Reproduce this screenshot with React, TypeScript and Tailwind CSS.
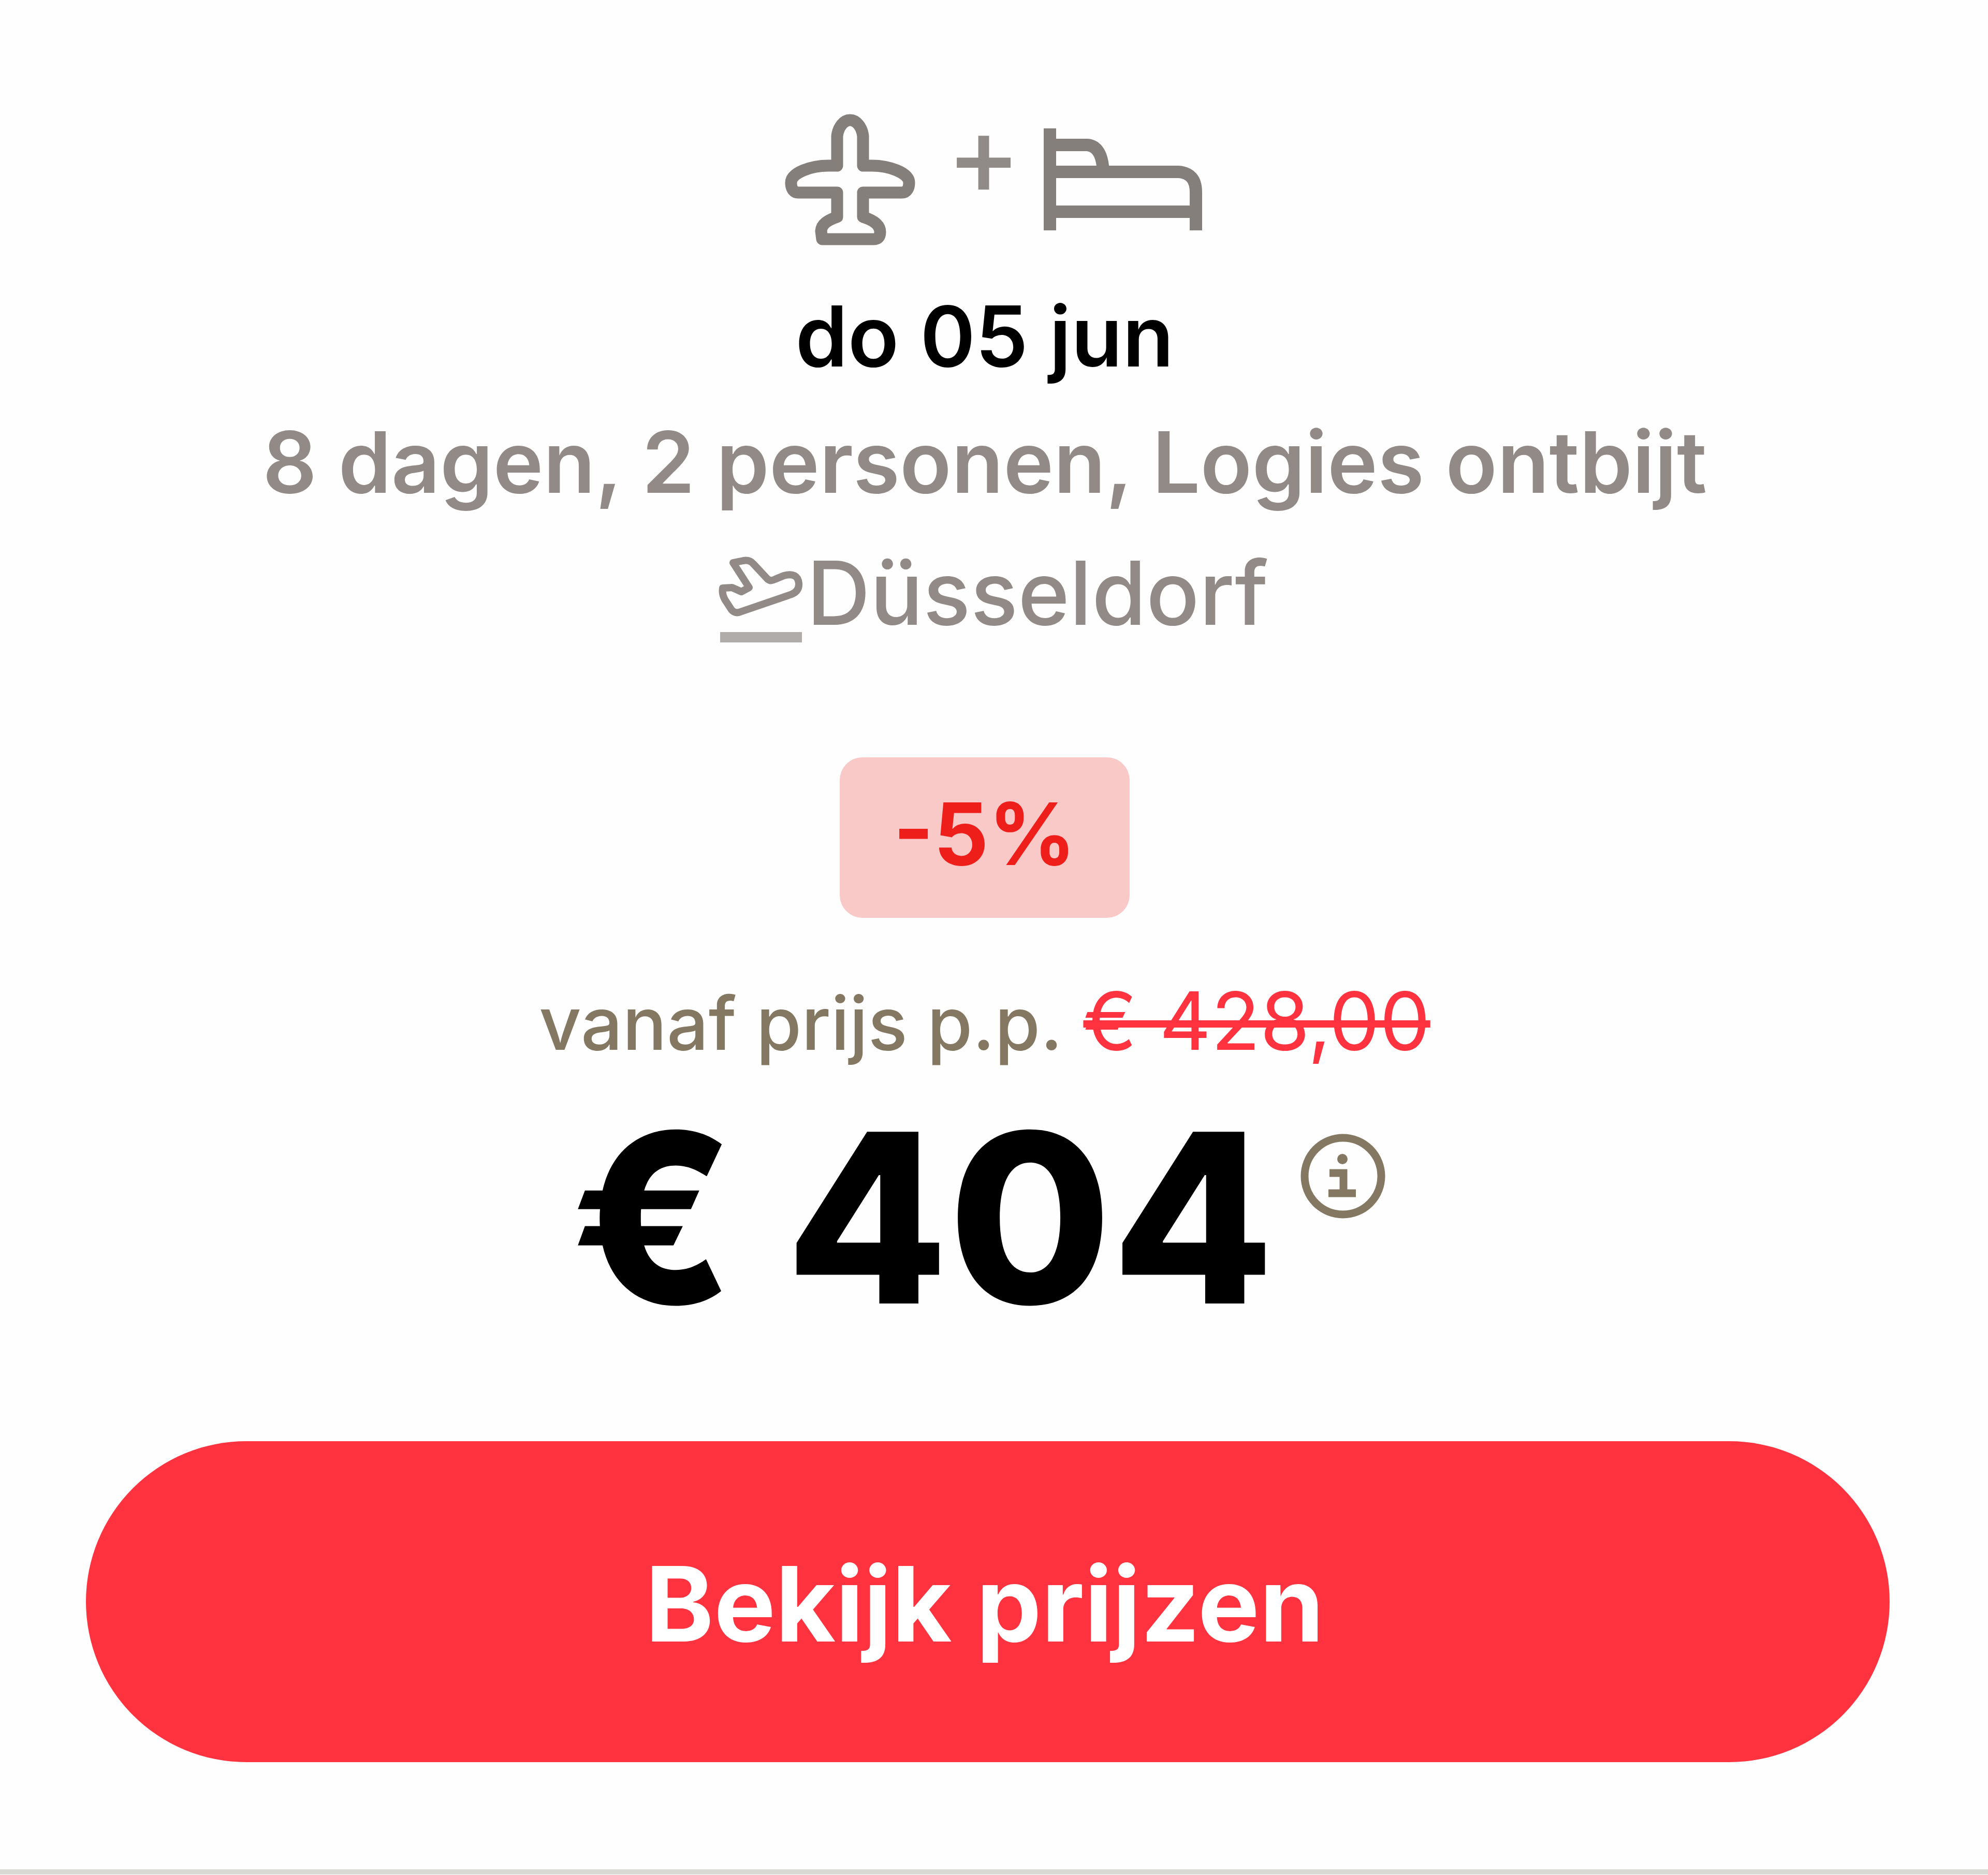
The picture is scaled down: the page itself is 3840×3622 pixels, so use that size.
import React from 'react';

interface Offer {
  date: string;
  details: string;
  airport: string;
  discount: string;
  oldPrice: string;
  price: string;
}

const offer: Offer = {
  date: 'do 05 jun',
  details: '8 dagen, 2 personen, Logies ontbijt',
  airport: 'Düsseldorf',
  discount: '-5%',
  oldPrice: '€ 428,00',
  price: '€ 404',
};

const PlaneIcon: React.FC = () => (
  <svg viewBox="0 0 260 262" className="w-[260px] h-[262px] text-[#857f7c]" fill="none" stroke="currentColor" strokeWidth={23} strokeLinejoin="round">
    <path d="M105 105V48C107 30 118 17 130 17S153 30 155 48V105H172C204 105 244 118 244 138C244 148 240 157 230 157H155V204C174 210 188 219 188 233C188 243 184 247 174 247H76L74 231C75 217 88 210 105 204V157H30C20 157 16 148 16 138C16 118 56 105 88 105Z" />
  </svg>
);

const BedIcon: React.FC = () => (
  <svg viewBox="0 0 310 207" className="w-[310px] h-[207px] text-[#857f7c]" fill="none" stroke="currentColor" strokeWidth={24}>
    <path d="M14 5V202" />
    <path d="M14 37H86Q115 39 117 89" />
    <path d="M14 89H262Q296 91 296 128V202" />
    <path d="M14 166H296" />
  </svg>
);

const TakeoffIcon: React.FC = () => (
  <svg viewBox="0 0 168 177" className="w-[168px] h-[177px]" fill="none" stroke="currentColor" strokeWidth={14} strokeLinejoin="round">
    <path d="M30 18L50 14Q62 12 69 20L96 49Q102 55 111 50L128 43Q155 36 157 58Q158 73 143 79L44 113Q34 117 27 109L14 89Q8 78 10 67L28 66L46 74L61 66Z" />
    <path d="M5 162H163" stroke="#b0acaa" strokeWidth={20} />
  </svg>
);

const InfoIcon: React.FC = () => (
  <svg viewBox="0 0 166 166" className="w-[166px] h-[166px]" fill="none" stroke="currentColor" strokeWidth={15}>
    <circle cx="83" cy="83" r="74" />
    <path d="M57 77H84V114M55 116H108" />
    <circle cx="82" cy="50" r="10" fill="currentColor" stroke="none" />
  </svg>
);

const OfferCard: React.FC<{ offer: Offer }> = ({ offer }) => (
  <section className="flex flex-col bg-[#fefefe] border-b-[10px] border-[#dadad5] pt-[215px] pb-[207px] pl-[166px] pr-[190px] font-['Inter',sans-serif]">
    <div className="flex flex-col items-center mr-3">
      {/* Flight + hotel */}
      <div className="flex items-center pl-8 text-[#918b88]">
        <PlaneIcon />
        <span className="self-start ml-[56px] mr-[42px] text-[216px] leading-[166px] font-medium">+</span>
        <BedIcon />
      </div>

      <p className="mt-[50px] text-[162px] leading-[244px] font-semibold text-black">{offer.date}</p>
      <p className="text-[164px] leading-[244px] font-semibold text-[#918a87]">{offer.details}</p>
      <div className="flex items-center gap-1 pl-8 text-[#918a87]">
        <div className="pt-6">
          <TakeoffIcon />
        </div>
        <span className="text-[170px] leading-[260px] font-medium">{offer.airport}</span>
      </div>

      {/* Discount badge */}
      <span className="mt-[188px] px-[104px] pb-[14px] rounded-[44px] bg-[#f9c9c8] text-[166px] leading-[296px] font-bold text-[#ee1f1b]">
        {offer.discount}
      </span>

      {/* Price */}
      <div className="mt-[79px] flex items-baseline gap-[40px] leading-[240px]">
        <span className="text-[142px] font-medium text-[#857862]">vanaf prijs p.p.</span>
        <del className="text-[155px] decoration-[14px] text-[#ff323f]">{offer.oldPrice}</del>
      </div>
      <div className="mt-[26px] flex items-start gap-[50px] pr-6">
        <strong className="text-[456px] leading-[460px] font-extrabold text-black">{offer.price}</strong>
        <button type="button" aria-label="Info" className="mt-[67px] text-[#857862]">
          <InfoIcon />
        </button>
      </div>
    </div>

    <button type="button" className="mt-[202px] h-[620px] w-full pr-3 pt-2 rounded-full bg-[#ff323f] text-[200px] font-bold text-white">
      Bekijk prijzen
    </button>
  </section>
);

export default function App() {
  return (
    <main className="min-h-screen bg-[#fefefe]">
      <OfferCard offer={offer} />
    </main>
  );
}
